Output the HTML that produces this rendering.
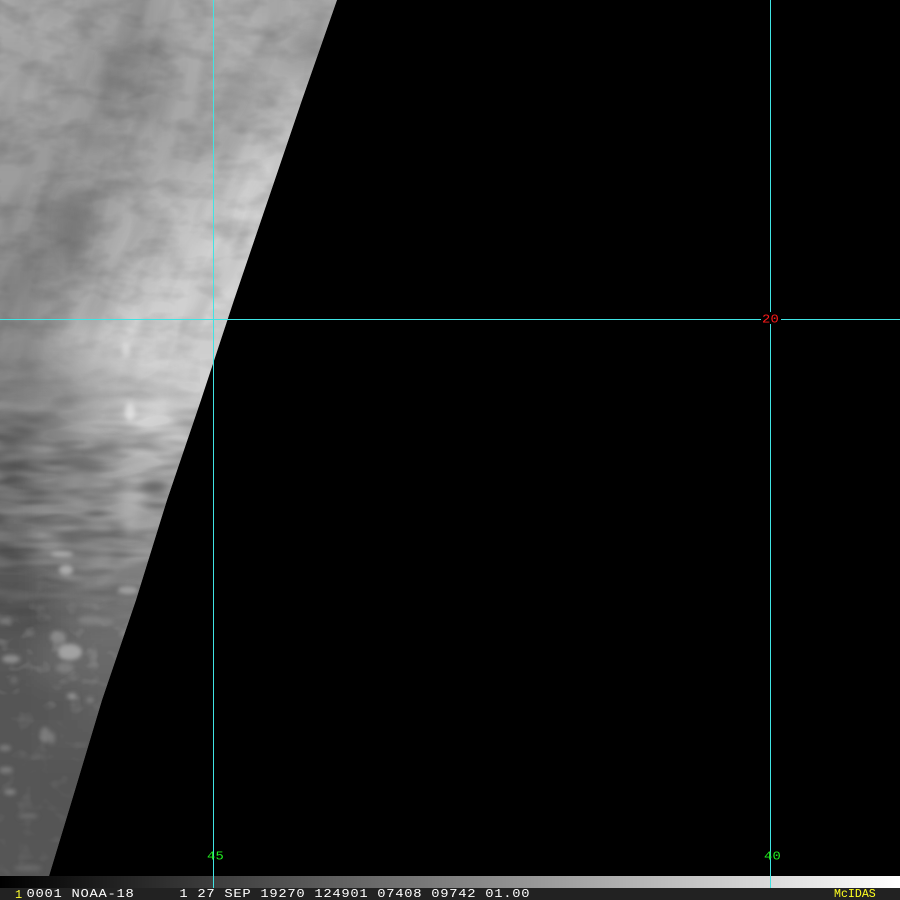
<!DOCTYPE html>
<html lang="en">
<head>
<meta charset="utf-8">
<title>McIDAS NOAA-18</title>
<style>
html,body{margin:0;padding:0;background:#000;width:900px;height:900px;overflow:hidden}
svg{display:block}
text{font-family:"Liberation Mono",monospace;white-space:pre}
</style>
</head>
<body>
<svg width="900" height="900" viewBox="0 0 900 900" xmlns="http://www.w3.org/2000/svg">
<defs>
<clipPath id="sw"><polygon points="0,0 337,0 302,100 268,200 234,300 201,400 167,500 136,600 102,700 72,800 49,876 0,876"/></clipPath>
<linearGradient id="bar" x1="0" y1="0" x2="1" y2="0">
<stop offset="0" stop-color="#000"/><stop offset=".03" stop-color="#080808"/><stop offset="1" stop-color="#fff"/>
</linearGradient>
<linearGradient id="gT" gradientUnits="userSpaceOnUse" x1="0" y1="0" x2="0" y2="900">
<stop offset=".36" stop-color="#fff"/><stop offset=".47" stop-color="#000"/>
</linearGradient>
<linearGradient id="gM" gradientUnits="userSpaceOnUse" x1="0" y1="0" x2="0" y2="900">
<stop offset=".39" stop-color="#000"/><stop offset=".49" stop-color="#fff"/><stop offset=".62" stop-color="#fff"/><stop offset=".71" stop-color="#000"/>
</linearGradient>
<linearGradient id="gB" gradientUnits="userSpaceOnUse" x1="0" y1="0" x2="0" y2="900">
<stop offset=".62" stop-color="#000"/><stop offset=".72" stop-color="#fff"/><stop offset=".82" stop-color="#777"/><stop offset="1" stop-color="#555"/>
</linearGradient>
<mask id="mT" maskUnits="userSpaceOnUse" x="0" y="0" width="900" height="900"><rect width="900" height="900" fill="url(#gT)"/></mask>
<mask id="mM" maskUnits="userSpaceOnUse" x="0" y="0" width="900" height="900"><rect width="900" height="900" fill="url(#gM)"/></mask>
<mask id="mB" maskUnits="userSpaceOnUse" x="0" y="0" width="900" height="900"><rect width="900" height="900" fill="url(#gB)"/></mask>
<filter id="m" x="-10%" y="-10%" width="120%" height="120%"><feGaussianBlur stdDeviation="13"/></filter>
<filter id="b6" x="-50%" y="-50%" width="200%" height="200%"><feGaussianBlur stdDeviation="5"/></filter>
<filter id="b3" x="-50%" y="-50%" width="200%" height="200%"><feGaussianBlur stdDeviation="2"/></filter>
<filter id="vd" x="0" y="0" width="100%" height="100%">
<feTurbulence type="fractalNoise" baseFrequency="0.045 0.014" numOctaves="2" seed="4"/>
<feColorMatrix type="matrix" values="0 0 0 0 0  0 0 0 0 0  0 0 0 0 0  2.2 0 0 0 -0.95"/>
</filter>
<filter id="ml" x="0" y="0" width="100%" height="100%">
<feTurbulence type="fractalNoise" baseFrequency="0.028 0.05" numOctaves="3" seed="12"/>
<feColorMatrix type="matrix" values="0 0 0 0 0  0 0 0 0 0  0 0 0 0 0  2.4 0 0 0 -1"/>
</filter>
<filter id="hd" x="0" y="0" width="100%" height="100%">
<feTurbulence type="fractalNoise" baseFrequency="0.018 0.07" numOctaves="2" seed="9"/>
<feColorMatrix type="matrix" values="0 0 0 0 0  0 0 0 0 0  0 0 0 0 0  2.6 0 0 0 -1"/>
</filter>
<filter id="hl" x="0" y="0" width="100%" height="100%">
<feTurbulence type="fractalNoise" baseFrequency="0.018 0.07" numOctaves="2" seed="31"/>
<feColorMatrix type="matrix" values="0 0 0 0 1  0 0 0 0 1  0 0 0 0 1  2.6 0 0 0 -1"/>
</filter>
<filter id="bl" x="0" y="0" width="100%" height="100%">
<feTurbulence type="fractalNoise" baseFrequency="0.06 0.08" numOctaves="2" seed="17"/>
<feColorMatrix type="matrix" values="0 0 0 0 1  0 0 0 0 1  0 0 0 0 1  3.2 0 0 0 -1.75"/>
</filter>
</defs>
<rect width="900" height="900" fill="#000"/>
<g clip-path="url(#sw)">
<rect x="-40" y="-40" width="420" height="960" fill="#6a6a6a"/>
<g filter="url(#m)">
<rect x="-40" y="-40" width="80" height="80" fill="rgb(168,168,168)"/><rect x="40" y="-40" width="40" height="80" fill="rgb(168,168,168)"/><rect x="80" y="-40" width="40" height="80" fill="rgb(162,162,162)"/><rect x="120" y="-40" width="40" height="80" fill="rgb(152,152,152)"/><rect x="160" y="-40" width="40" height="80" fill="rgb(168,168,168)"/><rect x="200" y="-40" width="40" height="80" fill="rgb(178,178,178)"/><rect x="240" y="-40" width="40" height="80" fill="rgb(175,175,175)"/><rect x="280" y="-40" width="80" height="80" fill="rgb(168,168,168)"/>
<rect x="-40" y="40" width="80" height="40" fill="rgb(162,162,162)"/><rect x="40" y="40" width="40" height="40" fill="rgb(168,168,168)"/><rect x="80" y="40" width="40" height="40" fill="rgb(150,150,150)"/><rect x="120" y="40" width="40" height="40" fill="rgb(140,140,140)"/><rect x="160" y="40" width="40" height="40" fill="rgb(168,168,168)"/><rect x="200" y="40" width="40" height="40" fill="rgb(172,172,172)"/><rect x="240" y="40" width="40" height="40" fill="rgb(175,175,175)"/><rect x="280" y="40" width="80" height="40" fill="rgb(158,158,158)"/>
<rect x="-40" y="80" width="80" height="40" fill="rgb(168,168,168)"/><rect x="40" y="80" width="40" height="40" fill="rgb(162,162,162)"/><rect x="80" y="80" width="40" height="40" fill="rgb(150,150,150)"/><rect x="120" y="80" width="40" height="40" fill="rgb(142,142,142)"/><rect x="160" y="80" width="40" height="40" fill="rgb(168,168,168)"/><rect x="200" y="80" width="40" height="40" fill="rgb(168,168,168)"/><rect x="240" y="80" width="40" height="40" fill="rgb(168,168,168)"/><rect x="280" y="80" width="80" height="40" fill="rgb(192,192,192)"/>
<rect x="-40" y="120" width="80" height="40" fill="rgb(152,152,152)"/><rect x="40" y="120" width="40" height="40" fill="rgb(158,158,158)"/><rect x="80" y="120" width="40" height="40" fill="rgb(152,152,152)"/><rect x="120" y="120" width="40" height="40" fill="rgb(162,162,162)"/><rect x="160" y="120" width="40" height="40" fill="rgb(168,168,168)"/><rect x="200" y="120" width="40" height="40" fill="rgb(168,168,168)"/><rect x="240" y="120" width="40" height="40" fill="rgb(192,192,192)"/><rect x="280" y="120" width="80" height="40" fill="rgb(208,208,208)"/>
<rect x="-40" y="160" width="80" height="40" fill="rgb(158,158,158)"/><rect x="40" y="160" width="40" height="40" fill="rgb(152,152,152)"/><rect x="80" y="160" width="40" height="40" fill="rgb(152,152,152)"/><rect x="120" y="160" width="40" height="40" fill="rgb(168,168,168)"/><rect x="160" y="160" width="40" height="40" fill="rgb(178,178,178)"/><rect x="200" y="160" width="40" height="40" fill="rgb(188,188,188)"/><rect x="240" y="160" width="120" height="40" fill="rgb(210,210,210)"/>
<rect x="-40" y="200" width="80" height="40" fill="rgb(148,148,148)"/><rect x="40" y="200" width="40" height="40" fill="rgb(128,128,128)"/><rect x="80" y="200" width="40" height="40" fill="rgb(162,162,162)"/><rect x="120" y="200" width="40" height="40" fill="rgb(178,178,178)"/><rect x="160" y="200" width="40" height="40" fill="rgb(192,192,192)"/><rect x="200" y="200" width="40" height="40" fill="rgb(202,202,202)"/><rect x="240" y="200" width="120" height="40" fill="rgb(216,216,216)"/>
<rect x="-40" y="240" width="80" height="40" fill="rgb(142,142,142)"/><rect x="40" y="240" width="40" height="40" fill="rgb(132,132,132)"/><rect x="80" y="240" width="40" height="40" fill="rgb(168,168,168)"/><rect x="120" y="240" width="40" height="40" fill="rgb(188,188,188)"/><rect x="160" y="240" width="40" height="40" fill="rgb(198,198,198)"/><rect x="200" y="240" width="160" height="40" fill="rgb(212,212,212)"/>
<rect x="-40" y="280" width="80" height="40" fill="rgb(138,138,138)"/><rect x="40" y="280" width="40" height="40" fill="rgb(152,152,152)"/><rect x="80" y="280" width="40" height="40" fill="rgb(178,178,178)"/><rect x="120" y="280" width="40" height="40" fill="rgb(202,202,202)"/><rect x="160" y="280" width="40" height="40" fill="rgb(208,208,208)"/><rect x="200" y="280" width="160" height="40" fill="rgb(212,212,212)"/>
<rect x="-40" y="320" width="80" height="40" fill="rgb(140,140,140)"/><rect x="40" y="320" width="40" height="40" fill="rgb(170,170,170)"/><rect x="80" y="320" width="40" height="40" fill="rgb(200,200,200)"/><rect x="120" y="320" width="40" height="40" fill="rgb(215,215,215)"/><rect x="160" y="320" width="200" height="40" fill="rgb(205,205,205)"/>
<rect x="-40" y="360" width="80" height="40" fill="rgb(135,135,135)"/><rect x="40" y="360" width="40" height="40" fill="rgb(150,150,150)"/><rect x="80" y="360" width="40" height="40" fill="rgb(175,175,175)"/><rect x="120" y="360" width="40" height="40" fill="rgb(205,205,205)"/><rect x="160" y="360" width="200" height="40" fill="rgb(210,210,210)"/>
<rect x="-40" y="400" width="80" height="40" fill="rgb(120,120,120)"/><rect x="40" y="400" width="40" height="40" fill="rgb(135,135,135)"/><rect x="80" y="400" width="40" height="40" fill="rgb(170,170,170)"/><rect x="120" y="400" width="40" height="40" fill="rgb(215,215,215)"/><rect x="160" y="400" width="200" height="40" fill="rgb(205,205,205)"/>
<rect x="-40" y="440" width="80" height="40" fill="rgb(105,105,105)"/><rect x="40" y="440" width="40" height="40" fill="rgb(130,130,130)"/><rect x="80" y="440" width="40" height="40" fill="rgb(150,150,150)"/><rect x="120" y="440" width="240" height="40" fill="rgb(175,175,175)"/>
<rect x="-40" y="480" width="80" height="40" fill="rgb(110,110,110)"/><rect x="40" y="480" width="40" height="40" fill="rgb(130,130,130)"/><rect x="80" y="480" width="40" height="40" fill="rgb(145,145,145)"/><rect x="120" y="480" width="240" height="40" fill="rgb(165,165,165)"/>
<rect x="-40" y="520" width="80" height="40" fill="rgb(104,104,104)"/><rect x="40" y="520" width="40" height="40" fill="rgb(145,145,145)"/><rect x="80" y="520" width="40" height="40" fill="rgb(135,135,135)"/><rect x="120" y="520" width="240" height="40" fill="rgb(140,140,140)"/>
<rect x="-40" y="560" width="80" height="40" fill="rgb(85,85,85)"/><rect x="40" y="560" width="40" height="40" fill="rgb(105,105,105)"/><rect x="80" y="560" width="40" height="40" fill="rgb(125,125,125)"/><rect x="120" y="560" width="240" height="40" fill="rgb(122,122,122)"/>
<rect x="-40" y="600" width="80" height="40" fill="rgb(85,85,85)"/><rect x="40" y="600" width="40" height="40" fill="rgb(95,95,95)"/><rect x="80" y="600" width="280" height="40" fill="rgb(112,112,112)"/>
<rect x="-40" y="640" width="80" height="40" fill="rgb(88,88,88)"/><rect x="40" y="640" width="40" height="40" fill="rgb(105,105,105)"/><rect x="80" y="640" width="280" height="40" fill="rgb(105,105,105)"/>
<rect x="-40" y="680" width="80" height="40" fill="rgb(84,84,84)"/><rect x="40" y="680" width="40" height="40" fill="rgb(88,88,88)"/><rect x="80" y="680" width="280" height="40" fill="rgb(98,98,98)"/>
<rect x="-40" y="720" width="80" height="40" fill="rgb(86,86,86)"/><rect x="40" y="720" width="320" height="40" fill="rgb(90,90,90)"/>
<rect x="-40" y="760" width="80" height="40" fill="rgb(86,86,86)"/><rect x="40" y="760" width="320" height="40" fill="rgb(84,84,84)"/>
<rect x="-40" y="800" width="400" height="40" fill="rgb(84,84,84)"/>
<rect x="-40" y="840" width="400" height="80" fill="rgb(86,86,86)"/>
</g>
<g mask="url(#mT)">
<rect x="-200" y="-200" width="700" height="800" filter="url(#vd)" opacity=".1" transform="rotate(19 170 200)"/>
<rect x="0" y="0" width="340" height="440" filter="url(#ml)" opacity=".13"/>
</g>
<g mask="url(#mM)">
<rect x="0" y="340" width="200" height="300" filter="url(#hd)" opacity=".3"/>
<rect x="0" y="340" width="200" height="300" filter="url(#hl)" opacity=".18"/>
</g>
<g mask="url(#mB)">
<rect x="0" y="550" width="160" height="330" filter="url(#bl)" opacity=".16"/>
</g>
<g filter="url(#b6)">
<ellipse cx="122" cy="60" rx="20" ry="8" fill="#7a7a7a" opacity=".55"/>
<ellipse cx="115" cy="82" rx="22" ry="7" fill="#757575" opacity=".55"/>
<ellipse cx="95" cy="142" rx="22" ry="8" fill="#7f7f7f" opacity=".45"/>
<ellipse cx="232" cy="95" rx="8" ry="24" fill="#8c8c8c" opacity=".55" transform="rotate(22 232 95)"/>
<ellipse cx="305" cy="42" rx="12" ry="8" fill="#8c8c8c" opacity=".6"/>
<ellipse cx="72" cy="225" rx="12" ry="36" fill="#707070" opacity=".5"/>
<ellipse cx="105" cy="447" rx="14" ry="6" fill="#6c6c6c" opacity=".7"/>
<ellipse cx="155" cy="488" rx="13" ry="7" fill="#5e5e5e" opacity=".9"/>
<ellipse cx="130" cy="510" rx="9" ry="28" fill="#b8b8b8" opacity=".5"/>
</g>
<g filter="url(#b3)">
<ellipse cx="130" cy="412" rx="5" ry="9" fill="#e8e8e8" opacity=".7"/>
<ellipse cx="126" cy="350" rx="4" ry="7" fill="#e4e4e4" opacity=".55"/>
<ellipse cx="62" cy="554" rx="11" ry="3" fill="#bcbcbc" opacity=".7"/>
<ellipse cx="66" cy="570" rx="7" ry="5" fill="#c4c4c4" opacity=".7"/>
<ellipse cx="128" cy="590" rx="10" ry="4" fill="#bcbcbc" opacity=".6"/>
<ellipse cx="70" cy="652" rx="12" ry="8" fill="#b0b0b0" opacity=".8"/>
<ellipse cx="58" cy="637" rx="8" ry="6" fill="#959595" opacity=".7"/>
<ellipse cx="65" cy="668" rx="9" ry="5" fill="#8d8d8d" opacity=".6"/>
<ellipse cx="72" cy="696" rx="5" ry="3" fill="#a0a0a0" opacity=".8"/>
<ellipse cx="90" cy="700" rx="4" ry="3" fill="#8b8b8b" opacity=".7"/>
<ellipse cx="90" cy="620" rx="12" ry="4" fill="#8d8d8d" opacity=".6"/>
<ellipse cx="105" cy="622" rx="8" ry="4" fill="#8c8c8c" opacity=".5"/>
<ellipse cx="5" cy="621" rx="6" ry="3" fill="#8c8c8c" opacity=".7"/>
<ellipse cx="11" cy="659" rx="9" ry="4" fill="#9a9a9a" opacity=".8"/>
<ellipse cx="30" cy="633" rx="5" ry="3" fill="#7c7c7c" opacity=".7"/>
<ellipse cx="14" cy="680" rx="4" ry="4" fill="#747474" opacity=".7"/>
<ellipse cx="45" cy="735" rx="5" ry="8" fill="#8a8a8a" opacity=".7"/>
<ellipse cx="52" cy="738" rx="3" ry="6" fill="#858585" opacity=".7"/>
<ellipse cx="5" cy="748" rx="6" ry="3" fill="#8c8c8c" opacity=".7"/>
<ellipse cx="6" cy="770" rx="7" ry="3" fill="#909090" opacity=".7"/>
<ellipse cx="10" cy="792" rx="6" ry="3" fill="#939393" opacity=".7"/>
<ellipse cx="28" cy="816" rx="10" ry="2.5" fill="#808080" opacity=".6"/>
<ellipse cx="28" cy="868" rx="14" ry="3" fill="#727272" opacity=".7"/>
</g>
</g>
<!-- grid -->
<rect x="0" y="319" width="761" height="1" fill="#40e4e4"/>
<rect x="781" y="319" width="119" height="1" fill="#40e4e4"/>
<rect x="213" y="0" width="1" height="888" fill="#40e4e4"/>
<rect x="770" y="0" width="1" height="312" fill="#40e4e4"/>
<rect x="770" y="324" width="1" height="552" fill="#40e4e4"/>
<!-- bar -->
<rect x="0" y="876" width="900" height="12" fill="url(#bar)"/>
<rect x="213" y="876" width="1" height="12" fill="#40e4e4"/>
<rect x="770" y="876" width="1" height="12" fill="#40e4e4"/>
<rect x="0" y="888" width="900" height="12" fill="#222"/>
<!-- labels -->
<text transform="translate(207,859.5) scale(1.15,1)" font-size="12" letter-spacing=".2" fill="#20ee20">45</text>
<text transform="translate(764,859.5) scale(1.15,1)" font-size="12" letter-spacing=".2" fill="#20ee20">40</text>
<text transform="translate(762,322.5) scale(1.15,1)" font-size="12" letter-spacing=".2" fill="#ff1a1a">20</text>
<text transform="translate(15,898)" font-size="12" fill="#ffff30">1</text>
<text transform="translate(26.5,897) scale(1.15,1)" font-size="12" letter-spacing=".626" fill="#fff">0001 NOAA-18     1 27 SEP 19270 124901 07408 09742 01.00</text>
<text transform="translate(834,897)" font-size="11.6" fill="#ffff20">McIDAS</text>
</svg>
</body>
</html>
